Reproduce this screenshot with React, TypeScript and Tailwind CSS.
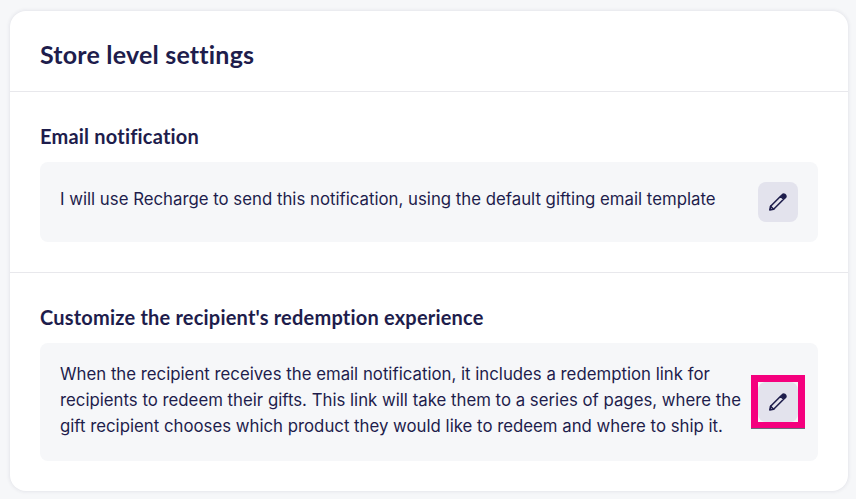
import React from "react";

function Pencil() {
  return (
    <svg width="20" height="20" viewBox="0 0 20 20" fill="none" stroke="#1e1d4c" strokeWidth="1.6" strokeLinejoin="round" strokeLinecap="round">
      <path d="M1.8 17.9 L2.6 14.2 L12.6 4.2 L15.6 7.2 L5.6 17.2 Z" />
      <path d="M2.6 14.2 L5.6 17.2" />
      <path d="M14.6 2.4 Q15.6 1.6 16.7 2.4 L17.6 3.3 Q18.4 4.4 17.6 5.4 L16.4 6.4 L13.6 3.6 Z" fill="#1e1d4c" />
    </svg>
  );
}

function EditButton({ highlighted }: { highlighted?: boolean }) {
  return (
    <div className="relative shrink-0">
      {highlighted && (
        <div className="absolute -left-[7px] -right-[7px] -top-[7px] -bottom-[6px] border-[7px] border-b-[6px] border-[#f5007e] shadow-[0_1px_0_#6b6b7b]" />
      )}
      <button className="relative flex h-10 w-10 items-center justify-center rounded-lg bg-[#e3e3ed]">
        <Pencil />
      </button>
    </div>
  );
}

export default function App() {
  return (
    <div className="h-[499px] w-[856px] overflow-hidden bg-[#f6f7f9] pl-[10px] pr-2 pt-[11px] font-['Inter',sans-serif] text-[#1e1d4c]">
      <div className="h-[480px] w-[838px] rounded-2xl bg-white shadow-[0_0_4px_rgba(30,29,76,0.12)]">
        <div className="flex h-[81px] items-center border-b border-[#e8e8ec] px-[30px] pt-[6px]">
          <h1 className="font-['Lato',sans-serif] text-[25px] font-bold leading-8 tracking-[0.2px]">Store level settings</h1>
        </div>
        <section className="h-[181px] border-b border-[#e8e8ec] px-[30px] pt-[29px]">
          <h2 className="font-['Lato',sans-serif] text-[20px] font-bold leading-[30px] tracking-[0.2px]">Email notification</h2>
          <div className="mt-[11px] flex h-[80px] items-center justify-between rounded-lg bg-[#f6f7f9] pl-5 pr-5">
            <p className="pb-[6px] text-[16.8px] leading-[26px]">I will use Recharge to send this notification, using the default gifting email template</p>
            <EditButton />
          </div>
        </section>
        <section className="px-[30px] pt-[29px]">
          <h2 className="font-['Lato',sans-serif] text-[20px] font-bold leading-[30px] tracking-[0.2px]">Customize the recipient's redemption experience</h2>
          <div className="mt-[11px] flex h-[118px] items-center justify-between rounded-lg bg-[#f6f7f9] pl-5 pr-5">
            <p className="w-[684px] pb-1 text-[16.8px] leading-[26px]">When the recipient receives the email notification, it includes a redemption link for recipients to redeem their gifts. This link will take them to a series of pages, where the gift recipient chooses which product they would like to redeem and where to ship it.</p>
            <EditButton highlighted />
          </div>
        </section>
      </div>
    </div>
  );
}
